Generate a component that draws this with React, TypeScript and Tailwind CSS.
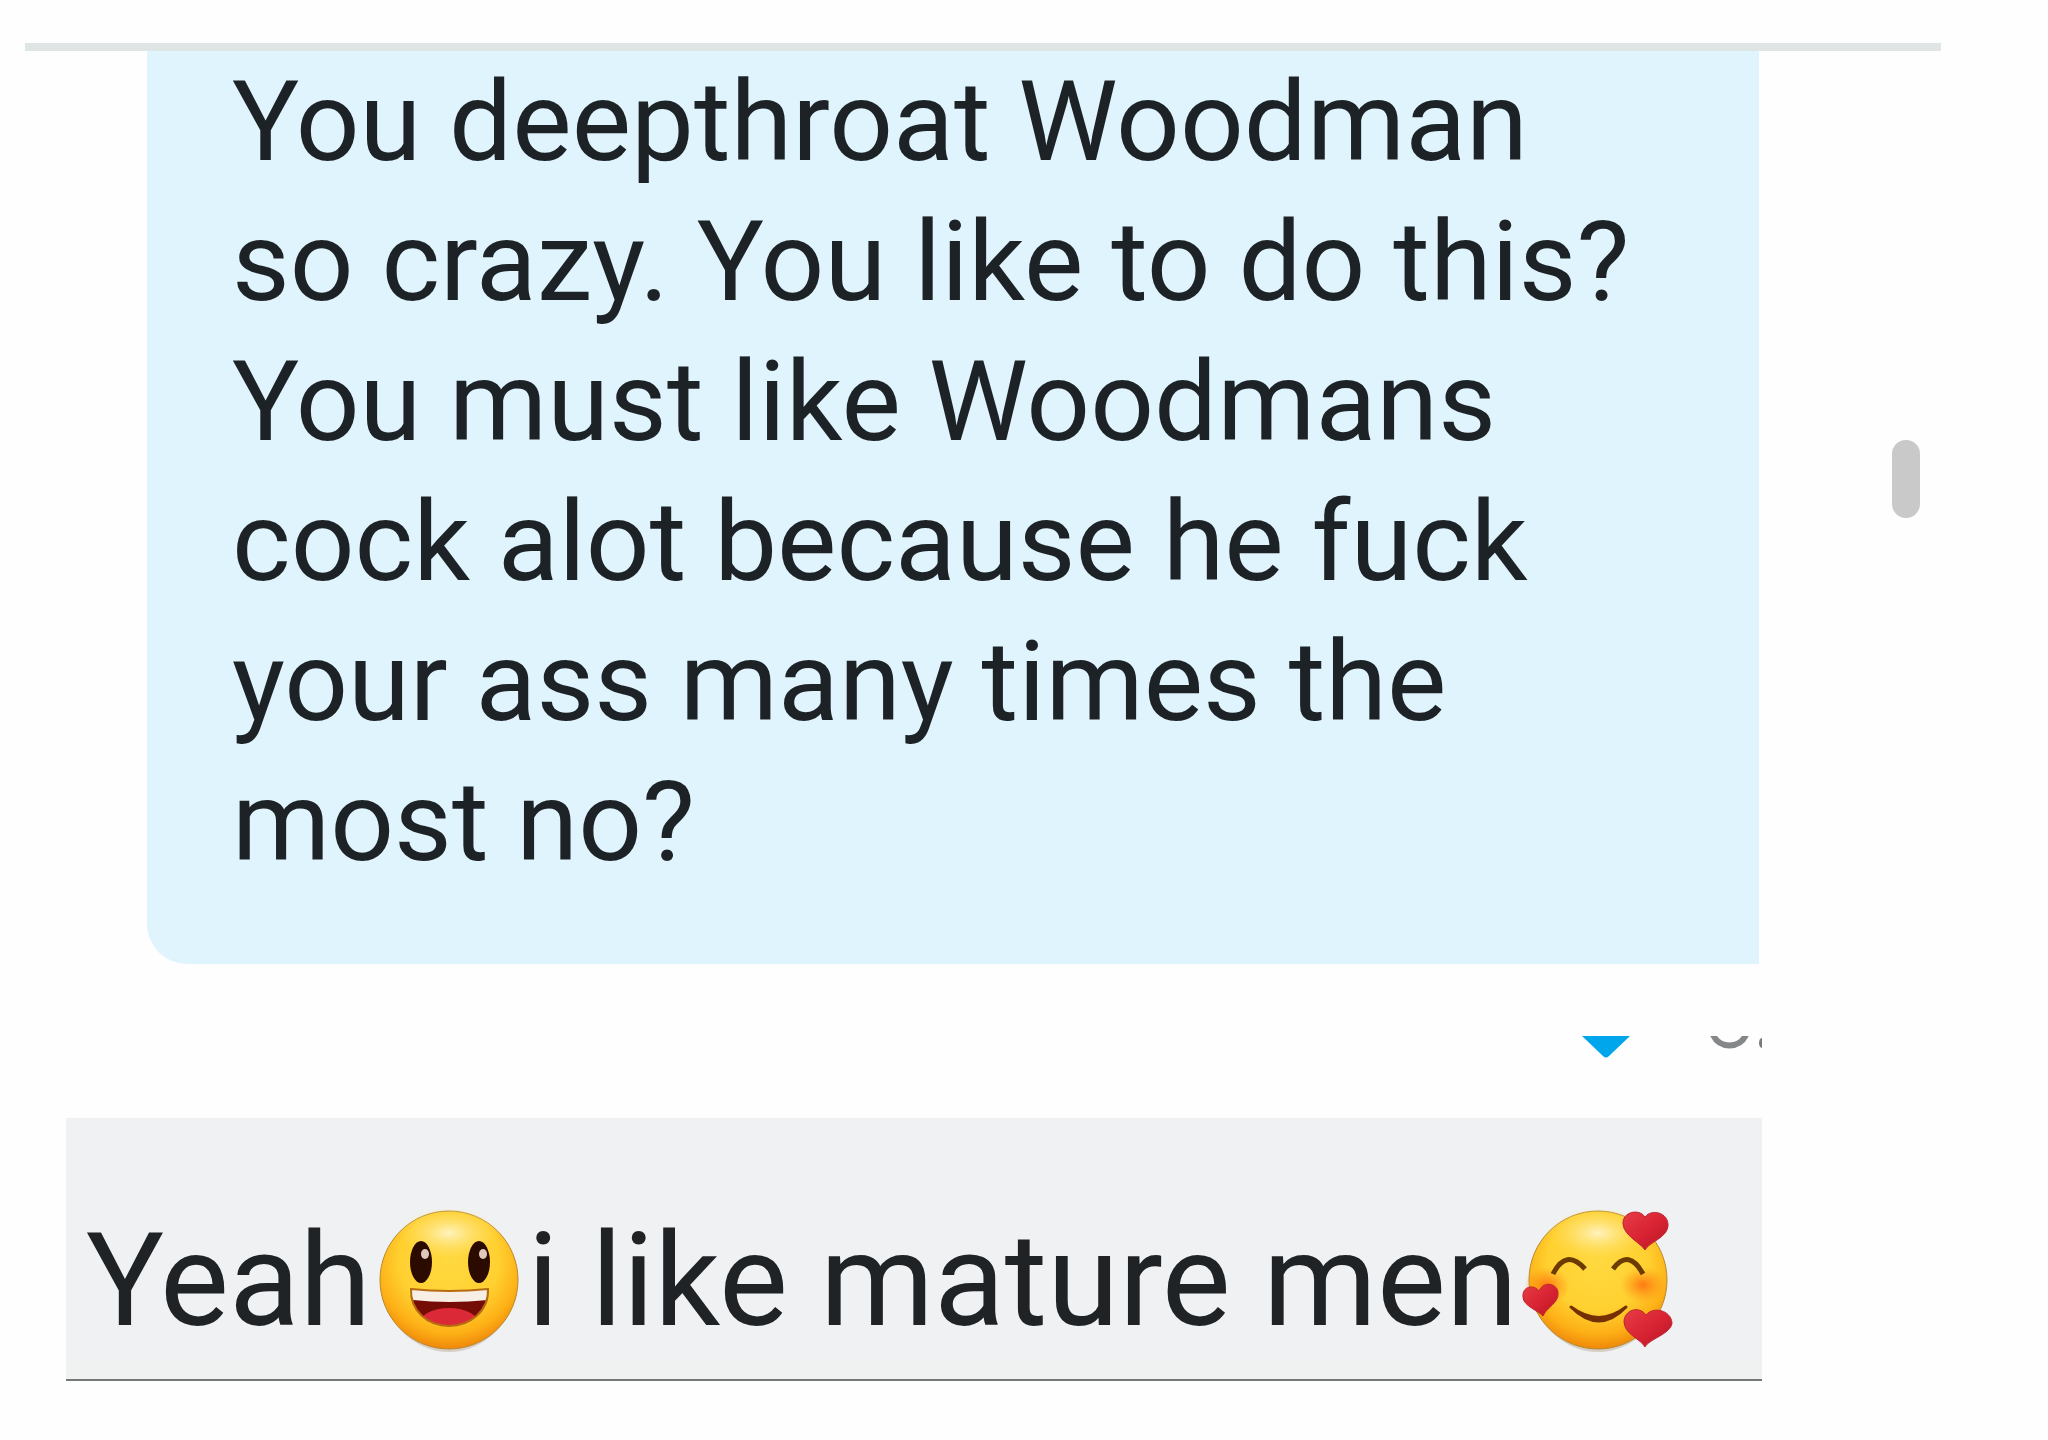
const lines = [
  'You deepthroat Woodman',
  'so crazy. You like to do this?',
  'You must like Woodmans',
  'cock alot because he fuck',
  'your ass many times the',
  'most no?',
];

function Grin() {
  return (
    <svg viewBox="0 0 140 144" className="ml-2 h-36 w-[140px] shrink-0" role="img" aria-label="Grinning face">
      <defs>
        <radialGradient id="face" cx="50%" cy="36%" r="66%">
          <stop offset="0" stopColor="#ffd940" />
          <stop offset="0.55" stopColor="#ffd030" />
          <stop offset="0.8" stopColor="#fdb016" />
          <stop offset="1" stopColor="#ed8008" />
        </radialGradient>
        <radialGradient id="shine" cx="50%" cy="50%" r="50%">
          <stop offset="0" stopColor="#fff6cf" stopOpacity="0.9" />
          <stop offset="1" stopColor="#ffe269" stopOpacity="0" />
        </radialGradient>
        <clipPath id="mouth">
          <path d="M32 80Q70 84 109 80C110 102 91 117 70 117S31 102 32 80Z" />
        </clipPath>
      </defs>
      <ellipse cx="70" cy="74" rx="66" ry="69" fill="#9b805e" opacity="0.3" />
      <circle cx="70" cy="71" r="69" fill="url(#face)" stroke="#b88931" strokeWidth="1" />
      <ellipse cx="70" cy="24" rx="50" ry="26" fill="url(#shine)" />
      <ellipse cx="42" cy="53" rx="11" ry="21" fill="#2b0a00" />
      <ellipse cx="100" cy="53" rx="11" ry="21" fill="#2b0a00" />
      <ellipse cx="46" cy="45" rx="4" ry="5" fill="#dfc8bb" />
      <ellipse cx="104" cy="45" rx="4" ry="5" fill="#dfc8bb" />
      <g clipPath="url(#mouth)">
        <rect x="28" y="76" width="84" height="44" fill="#760c06" />
        <ellipse cx="70" cy="115" rx="30" ry="16" fill="#dc2937" />
        <path d="M30 79h82l-3 12Q70 95 34 91Z" fill="#f7eee5" />
      </g>
      <path d="M32 80Q70 84 109 80C110 102 91 117 70 117S31 102 32 80Z" fill="none" stroke="#b76b10" strokeWidth="2" />
    </svg>
  );
}

function Heart({ d }: { d: string }) {
  return <path d={d} fill="url(#heart)" stroke="#bd2530" strokeWidth="1" />;
}

function Love() {
  return (
    <svg viewBox="0 0 152 144" className="ml-1 h-36 w-[152px] shrink-0" role="img" aria-label="Smiling face with hearts">
      <defs>
        <radialGradient id="blush" cx="50%" cy="50%" r="50%">
          <stop offset="0" stopColor="#ff7010" stopOpacity="0.9" />
          <stop offset="1" stopColor="#ff8a10" stopOpacity="0" />
        </radialGradient>
        <linearGradient id="heart" x1="0" y1="0" x2="1" y2="1">
          <stop offset="0" stopColor="#e63d46" />
          <stop offset="0.5" stopColor="#d92433" />
          <stop offset="1" stopColor="#b91527" />
        </linearGradient>
      </defs>
      <ellipse cx="76" cy="74" rx="66" ry="69" fill="#9b805e" opacity="0.3" />
      <circle cx="76" cy="71" r="69" fill="url(#face)" stroke="#b88931" strokeWidth="1" />
      <ellipse cx="76" cy="24" rx="50" ry="26" fill="url(#shine)" />
      <ellipse cx="25" cy="77" rx="23" ry="19" fill="url(#blush)" />
      <ellipse cx="121" cy="76" rx="23" ry="18" fill="url(#blush)" />
      <path d="M31 65Q44 39 63 60M91 60Q107 39 121 65" fill="none" stroke="#6b3b02" strokeWidth="5" />
      <path d="M49 98Q77 119 104 98Q77 126 49 98Z" fill="#743002" stroke="#743002" strokeWidth="3" strokeLinejoin="round" />
      <Heart d="M123 41C119 34 102 27 101 15C100 3 117 -1 123 8C130 -1 147 4 146 17C145 29 127 33 123 41Z" />
      <Heart d="M21 107C17 102 1 97 1 88C0 77 12 75 17 82C22 71 36 75 36 84C37 94 24 99 21 107Z" />
      <Heart d="M123 138C119 130 103 126 102 113C102 101 117 96 124 106C131 97 149 101 150 114C149 125 127 130 123 138Z" />
    </svg>
  );
}

export default function App() {
  return (
    <main className="min-h-screen bg-[#fefefe] pt-[43px] font-['Roboto',sans-serif] text-[#1d2226]">
      <section className="mr-[107px] ml-[25px] border-t-8 border-[#dfe5e5]">
        <div className="flex items-center justify-between pr-[21px]">
          <div className="ml-[122px] w-[1612px] rounded-bl-[40px] bg-[#dff4fd] pt-[1px] pb-[72px] pl-[85px]">
            <p className="text-[112px] leading-[140px] whitespace-nowrap">
              {lines.map((line) => (
                <span key={line} className="block">{line}</span>
              ))}
            </p>
          </div>
          <div className="mb-[58px] h-[78px] w-7 rounded-full bg-[#c9c9c9]" />
        </div>
      </section>
      <section className="mr-[286px] ml-[66px] pt-[72px]">
        <div className="flex h-[82px] justify-end">
          <svg viewBox="0 0 180 24" className="h-6 w-[180px]" aria-hidden="true">
            <path d="M0 0H48L27 20Q24 23 21 20Z" fill="#00a6eb" />
            <path d="M131 -1C138 13 157 13 164 -1" fill="none" stroke="#848888" strokeWidth="6" />
            <ellipse cx="180" cy="7" rx="3" ry="5" fill="#777b7d" />
          </svg>
        </div>
        <div className="border-b-2 border-[#747678] bg-[#f0f1f3] pt-[87px]">
          <p className="flex items-center pl-5 text-[130px] leading-[152px] whitespace-nowrap text-[#202326]">
            <span>Yeah</span>
            <Grin />
            <span className="ml-2">i like mature men</span>
            <Love />
          </p>
          <div className="mt-1 h-[18px] bg-[#f0f2f1]" />
        </div>
      </section>
    </main>
  );
}
